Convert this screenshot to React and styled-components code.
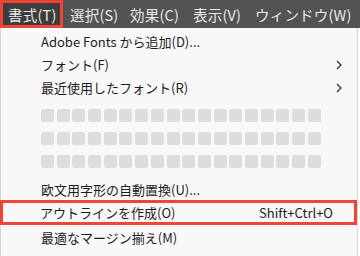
import React from "react";
import styled, { createGlobalStyle } from "styled-components";

const Global = createGlobalStyle`
  html, body { margin: 0; padding: 0; background: #f8f8f8; }
  body { width: 360px; height: 256px; overflow: hidden; font-family: "Noto Sans CJK JP", "Noto Sans", sans-serif; }
`;

const Page = styled.div`
  width: 360px;
  height: 256px;
  display: flex;
  flex-direction: column;
  background: #ffffff;
`;

const MenuBar = styled.div`
  height: 28px;
  background: #535353;
  display: flex;
  align-items: stretch;
  flex-shrink: 0;
`;

const MenuTitle = styled.div`
  box-sizing: border-box;
  width: ${(p) => p.$w}px;
  display: flex;
  align-items: center;
  padding-left: ${(p) => (p.$active ? 5 : 7)}px;
  color: #e8e8e8;
  font-size: 14.5px;
  letter-spacing: 0.2px;
  border: ${(p) => (p.$active ? "3px solid #f04438" : "none")};
  background: ${(p) => (p.$active ? "#3d3d3d" : "transparent")};
  white-space: nowrap;
`;

const Dropdown = styled.div`
  box-sizing: border-box;
  width: 358px;
  flex: 1;
  background: #f8f8f8;
  border-left: 1px solid #d6d6d6;
  border-right: 1px solid #d6d6d6;
  padding-top: 2px;
  display: flex;
  flex-direction: column;
`;

const Item = styled.div`
  box-sizing: border-box;
  height: ${(p) => p.$h || 23}px;
  margin-top: ${(p) => p.$mt || 0}px;
  display: flex;
  align-items: center;
  padding-left: ${(p) => (p.$boxed ? 37 : 40)}px;
  padding-right: ${(p) => (p.$boxed ? 21 : 15)}px;
  font-size: 13px;
  color: #1c1c1c;
  border: ${(p) => (p.$boxed ? "3px solid #f04438" : "none")};
  margin-left: ${(p) => (p.$boxed ? -1 : 0)}px;
  white-space: nowrap;
`;

const Label = styled.span`
  flex: 1;
`;

const Shortcut = styled.span`
  color: #1c1c1c;
`;

const Chevron = styled.svg`
  width: 6px;
  height: 10px;
`;

const BlockRow = styled.div`
  height: 23px;
  margin-top: ${(p) => p.$mt || 0}px;
  display: flex;
  align-items: center;
  gap: 2.7px;
  padding-left: 40px;
`;

const Block = styled.div`
  width: 13px;
  height: 13px;
  border-radius: 2px;
  background: #dcdddc;
`;

const menus = [
  { t: "書式(T)", w: 63, active: true },
  { t: "選択(S)", w: 60 },
  { t: "効果(C)", w: 63 },
  { t: "表示(V)", w: 62 },
  { t: "ウィンドウ(W)", w: 100 },
];

const Arrow = () => (
  <Chevron viewBox="0 0 6 10">
    <polyline points="1,1 5,5 1,9" fill="none" stroke="#333" strokeWidth="1.3" />
  </Chevron>
);

const Blocks = ({ mt }) => (
  <BlockRow $mt={mt}>
    {Array.from({ length: 18 }).map((_, i) => (
      <Block key={i} />
    ))}
  </BlockRow>
);

export default function App() {
  return (
    <>
      <Global />
      <Page>
        <MenuBar>
          {menus.map((m) => (
            <MenuTitle key={m.t} $w={m.w} $active={m.active}>
              {m.t}
            </MenuTitle>
          ))}
        </MenuBar>
        <Dropdown>
          <Item>
            <Label>Adobe Fonts から追加(D)...</Label>
          </Item>
          <Item>
            <Label>フォント(F)</Label>
            <Arrow />
          </Item>
          <Item>
            <Label>最近使用したフォント(R)</Label>
            <Arrow />
          </Item>
          <Blocks mt={5} />
          <Blocks />
          <Blocks />
          <Item $mt={5} $h={22}>
            <Label>欧文用字形の自動置換(U)...</Label>
          </Item>
          <Item $boxed $h={25}>
            <Label>アウトラインを作成(O)</Label>
            <Shortcut>Shift+Ctrl+O</Shortcut>
          </Item>
          <Item $h={24}>
            <Label>最適なマージン揃え(M)</Label>
          </Item>
        </Dropdown>
      </Page>
    </>
  );
}
